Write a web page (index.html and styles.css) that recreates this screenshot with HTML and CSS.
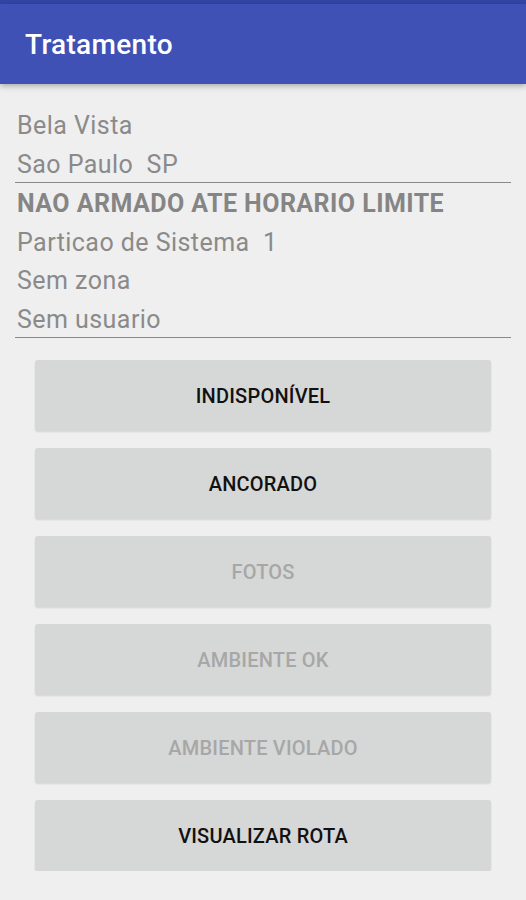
FILE: index.html
```html
<!DOCTYPE html>
<html lang="pt">
<head>
    <meta charset="UTF-8">
    <meta name="viewport" content="width=device-width, initial-scale=1.0">
    <title>Tratamento</title>
    <link rel="stylesheet" href="styles.css">
</head>
<body>

    <div class="statusbar"></div>
    <div class="toolbar">
        <h1 class="title">Tratamento</h1>
    </div>

    <div class="content">
        <div class="info-block">
            <div class="info-line">Bela Vista</div>
            <div class="info-line">Sao Paulo&nbsp; SP</div>
        </div>
        <div class="info-block">
            <div class="info-line strong">NAO ARMADO ATE HORARIO LIMITE</div>
            <div class="info-line">Particao de Sistema&nbsp; 1</div>
            <div class="info-line">Sem zona</div>
            <div class="info-line">Sem usuario</div>
        </div>

        <div class="buttons">
            <button class="action">INDISPONÍVEL</button>
            <button class="action">ANCORADO</button>
            <button class="action" disabled>FOTOS</button>
            <button class="action" disabled>AMBIENTE OK</button>
            <button class="action" disabled>AMBIENTE VIOLADO</button>
            <button class="action">VISUALIZAR ROTA</button>
        </div>
    </div>

</body>
</html>
```

FILE: styles.css
```css
body {
    margin: 0;
    font-family: Roboto, "Noto Sans", Arial, sans-serif;
    background-color: #efefef;
}
.statusbar {
    height: 4px;
    background-color: #3346a6;
}
.toolbar {
    height: 80px;
    background-color: #3f51b5;
    display: flex;
    align-items: center;
    padding-left: 25px;
    box-shadow: 0 2px 6px rgba(0, 0, 0, 0.3);
}
.title {
    margin: 0;
    color: #fff;
    font-size: 28px;
    font-weight: 500;
    letter-spacing: 0.3px;
}
.content {
    padding: 21px 15px 0 15px;
}
.info-block {
    border-bottom: 1px solid #8a8a8a;
}
.info-line {
    padding: 4px 0 0 2px;
    font-size: 25px;
    letter-spacing: 0.45px;
    line-height: 34.5px;
    color: #8a8a8a;
}
.info-line.strong {
    font-weight: bold;
    color: #858585;
}
.buttons {
    display: flex;
    flex-direction: column;
    gap: 17px;
    padding: 22px 20px 0 20px;
}
.action {
    height: 71px;
    border: none;
    border-radius: 3px;
    background-color: #d6d7d7;
    box-shadow: 0 1px 2px rgba(0, 0, 0, 0.12);
    font-family: Roboto, "Noto Sans", Arial, sans-serif;
    font-size: 20px;
    font-weight: 500;
    letter-spacing: 0.2px;
    color: #111;
}
.action:disabled {
    color: #a7a7a7;
}
```
